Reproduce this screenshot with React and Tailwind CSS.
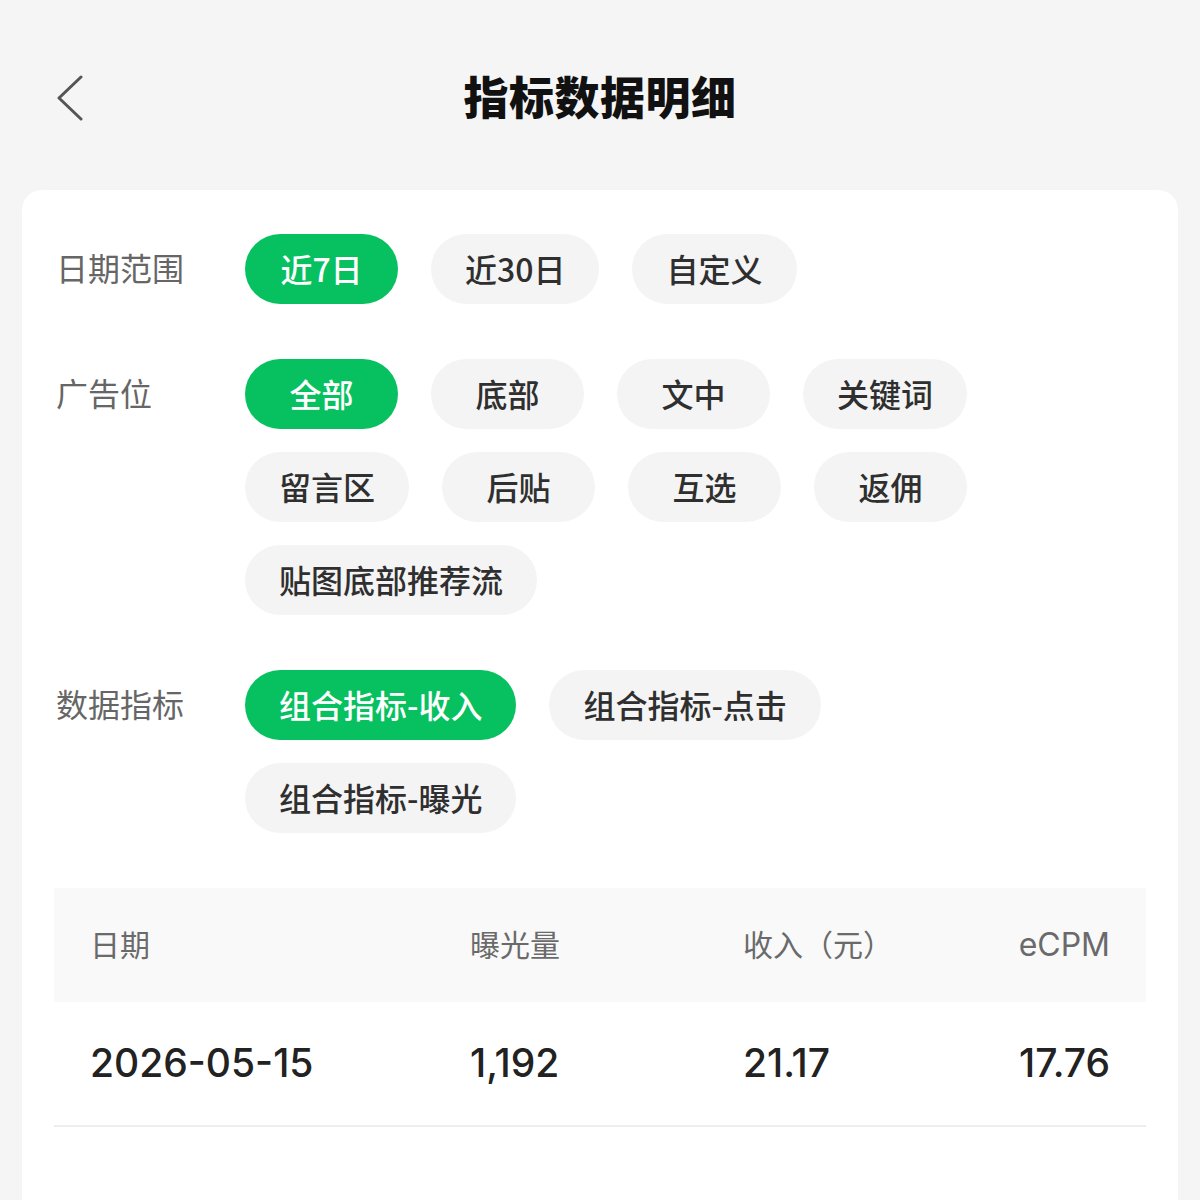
import { useState } from 'react'

const FONT = { fontFamily: '"Noto Sans CJK SC", "Noto Sans", sans-serif' }
const NUM_FONT = { fontFamily: 'Inter, "Noto Sans CJK SC", sans-serif' }

const sections = [
  { key: 'date', label: '日期范围', options: ['近7日', '近30日', '自定义'] },
  {
    key: 'slot',
    label: '广告位',
    options: ['全部', '底部', '文中', '关键词', '留言区', '后贴', '互选', '返佣', '贴图底部推荐流'],
  },
  { key: 'metric', label: '数据指标', options: ['组合指标-收入', '组合指标-点击', '组合指标-曝光'] },
]

const rows = [{ date: '2026-05-15', views: '1,192', income: '21.17', ecpm: '17.76' }]

function Chip({ text, active, onClick }) {
  return (
    <button
      onClick={onClick}
      className={
        active
          ? 'h-[70px] min-w-[153px] px-[34px] pb-[3px] rounded-full bg-[#07c160] text-white text-[32px] font-medium leading-none'
          : 'h-[70px] min-w-[153px] px-[34px] pb-[3px] rounded-full bg-[#f4f4f4] text-[#2f2f2f] text-[32px] font-medium leading-none'
      }
    >
      {text}
    </button>
  )
}

export default function App() {
  const [picked, setPicked] = useState({ date: '近7日', slot: '全部', metric: '组合指标-收入' })

  return (
    <div className="min-h-[1200px] bg-[#f4f5f4] overflow-hidden" style={FONT}>
      {/* Header */}
      <div className="grid grid-cols-[1fr_auto_1fr] items-center h-[190px] px-[56px]">
        <button className="w-[30px] h-[48px] flex items-center mt-[6px]">
          <svg width="28" height="46" viewBox="0 0 28 46" fill="none">
            <path d="M25 2 L3 23 L25 44" stroke="#555" strokeWidth="3" strokeLinecap="round" strokeLinejoin="round" />
          </svg>
        </button>
        <h1 className="text-[45px] font-black text-[#111] leading-none tracking-[0.5px]">指标数据明细</h1>
        <div />
      </div>

      {/* Card */}
      <div className="mx-[22px] bg-white rounded-[20px] pt-[44px] px-8 pb-[140px]">
        <div className="flex flex-col gap-[55px]">
          {sections.map((s) => (
            <div key={s.key} className="grid grid-cols-[191px_1fr]">
              <div className="h-[70px] flex items-center pl-[2px] pb-[4px] text-[32px] text-[#666] leading-none">{s.label}</div>
              <div className="flex flex-wrap gap-x-[33px] gap-y-[23px] w-[800px]">
                {s.options.map((o) => (
                  <Chip
                    key={o}
                    text={o}
                    active={picked[s.key] === o}
                    onClick={() => setPicked({ ...picked, [s.key]: o })}
                  />
                ))}
              </div>
            </div>
          ))}
        </div>

        {/* Table */}
        <div className="mt-[55px]">
          <div className="grid grid-cols-[380px_273px_1fr_auto] items-center h-[114px] px-9 pb-[5px] bg-[#f9f9f9] text-[30px] text-[#6a6a6a] leading-none">
            <div>日期</div>
            <div>曝光量</div>
            <div>收入（元）</div>
            <div className="text-right text-[32px] pt-[4px]" style={NUM_FONT}>eCPM</div>
          </div>
          {rows.map((r) => (
            <div
              key={r.date}
              className="grid grid-cols-[380px_273px_1fr_auto] items-center h-[125px] px-9 pb-[3px] border-b-2 border-[#eeeeee] text-[39px] font-medium text-[#222] leading-none"
              style={NUM_FONT}
            >
              <div>{r.date}</div>
              <div>{r.views}</div>
              <div>{r.income}</div>
              <div className="text-right">{r.ecpm}</div>
            </div>
          ))}
        </div>
      </div>
    </div>
  )
}
